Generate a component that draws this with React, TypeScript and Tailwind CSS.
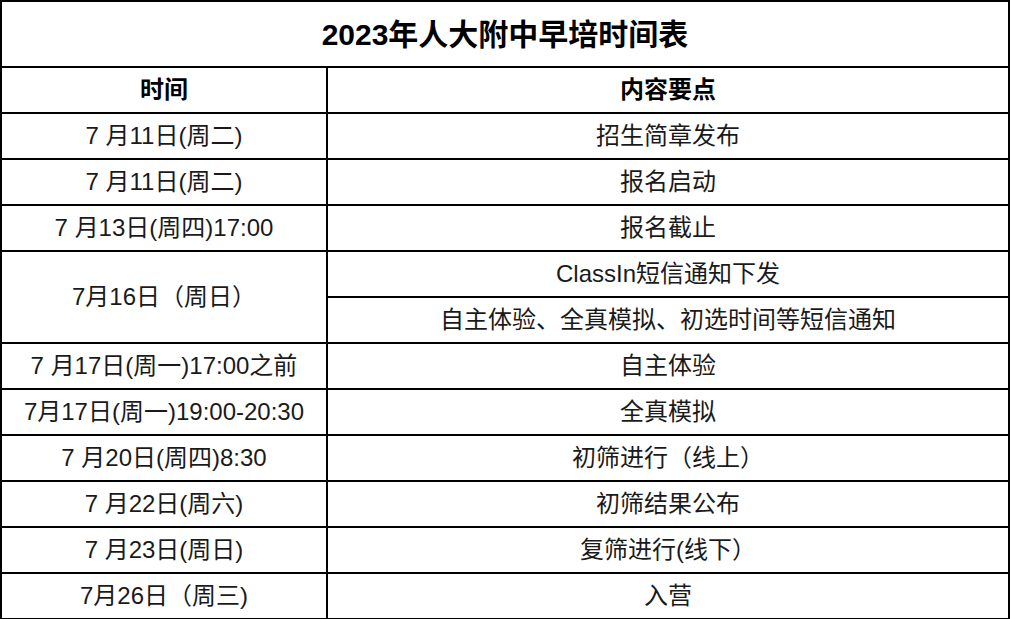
const rows: { time: string; items: string[] }[] = [
  { time: "7 月11日(周二)", items: ["招生简章发布"] },
  { time: "7 月11日(周二)", items: ["报名启动"] },
  { time: "7 月13日(周四)17:00", items: ["报名截止"] },
  { time: "7月16日（周日）", items: ["ClassIn短信通知下发", "自主体验、全真模拟、初选时间等短信通知"] },
  { time: "7 月17日(周一)17:00之前", items: ["自主体验"] },
  { time: "7月17日(周一)19:00-20:30", items: ["全真模拟"] },
  { time: "7 月20日(周四)8:30", items: ["初筛进行（线上）"] },
  { time: "7 月22日(周六)", items: ["初筛结果公布"] },
  { time: "7 月23日(周日)", items: ["复筛进行(线下）"] },
  { time: "7月26日（周三)", items: ["入营"] },
];

const cell = "border-2 border-black text-center align-middle p-0 whitespace-nowrap";

export default function App() {
  return (
    <div
      className="w-[1012px] h-[619px] bg-white text-black"
      style={{ fontFamily: '"Liberation Sans", Arial, "Noto Sans CJK SC", sans-serif' }}
    >
      <table className="w-[1010px] border-collapse table-fixed">
        <colgroup>
          <col className="w-[326px]" />
          <col />
        </colgroup>
        <tbody>
          <tr className="h-[66px]">
            <td colSpan={2} className={`${cell} text-[30px] font-bold`}>
              2023年人大附中早培时间表
            </td>
          </tr>
          <tr className="h-[46px]">
            <td className={`${cell} text-[24px] font-bold`}>时间</td>
            <td className={`${cell} text-[24px] font-bold`}>内容要点</td>
          </tr>
          {rows.map((r, i) =>
            r.items.map((item, j) => (
              <tr key={`${i}-${j}`} className="h-[46px]">
                {j === 0 && (
                  <td rowSpan={r.items.length} className={`${cell} text-[24px] text-[#1a1a1a]`}>
                    {r.time}
                  </td>
                )}
                <td className={`${cell} text-[24px] text-[#1a1a1a]`}>{item}</td>
              </tr>
            ))
          )}
        </tbody>
      </table>
    </div>
  );
}
